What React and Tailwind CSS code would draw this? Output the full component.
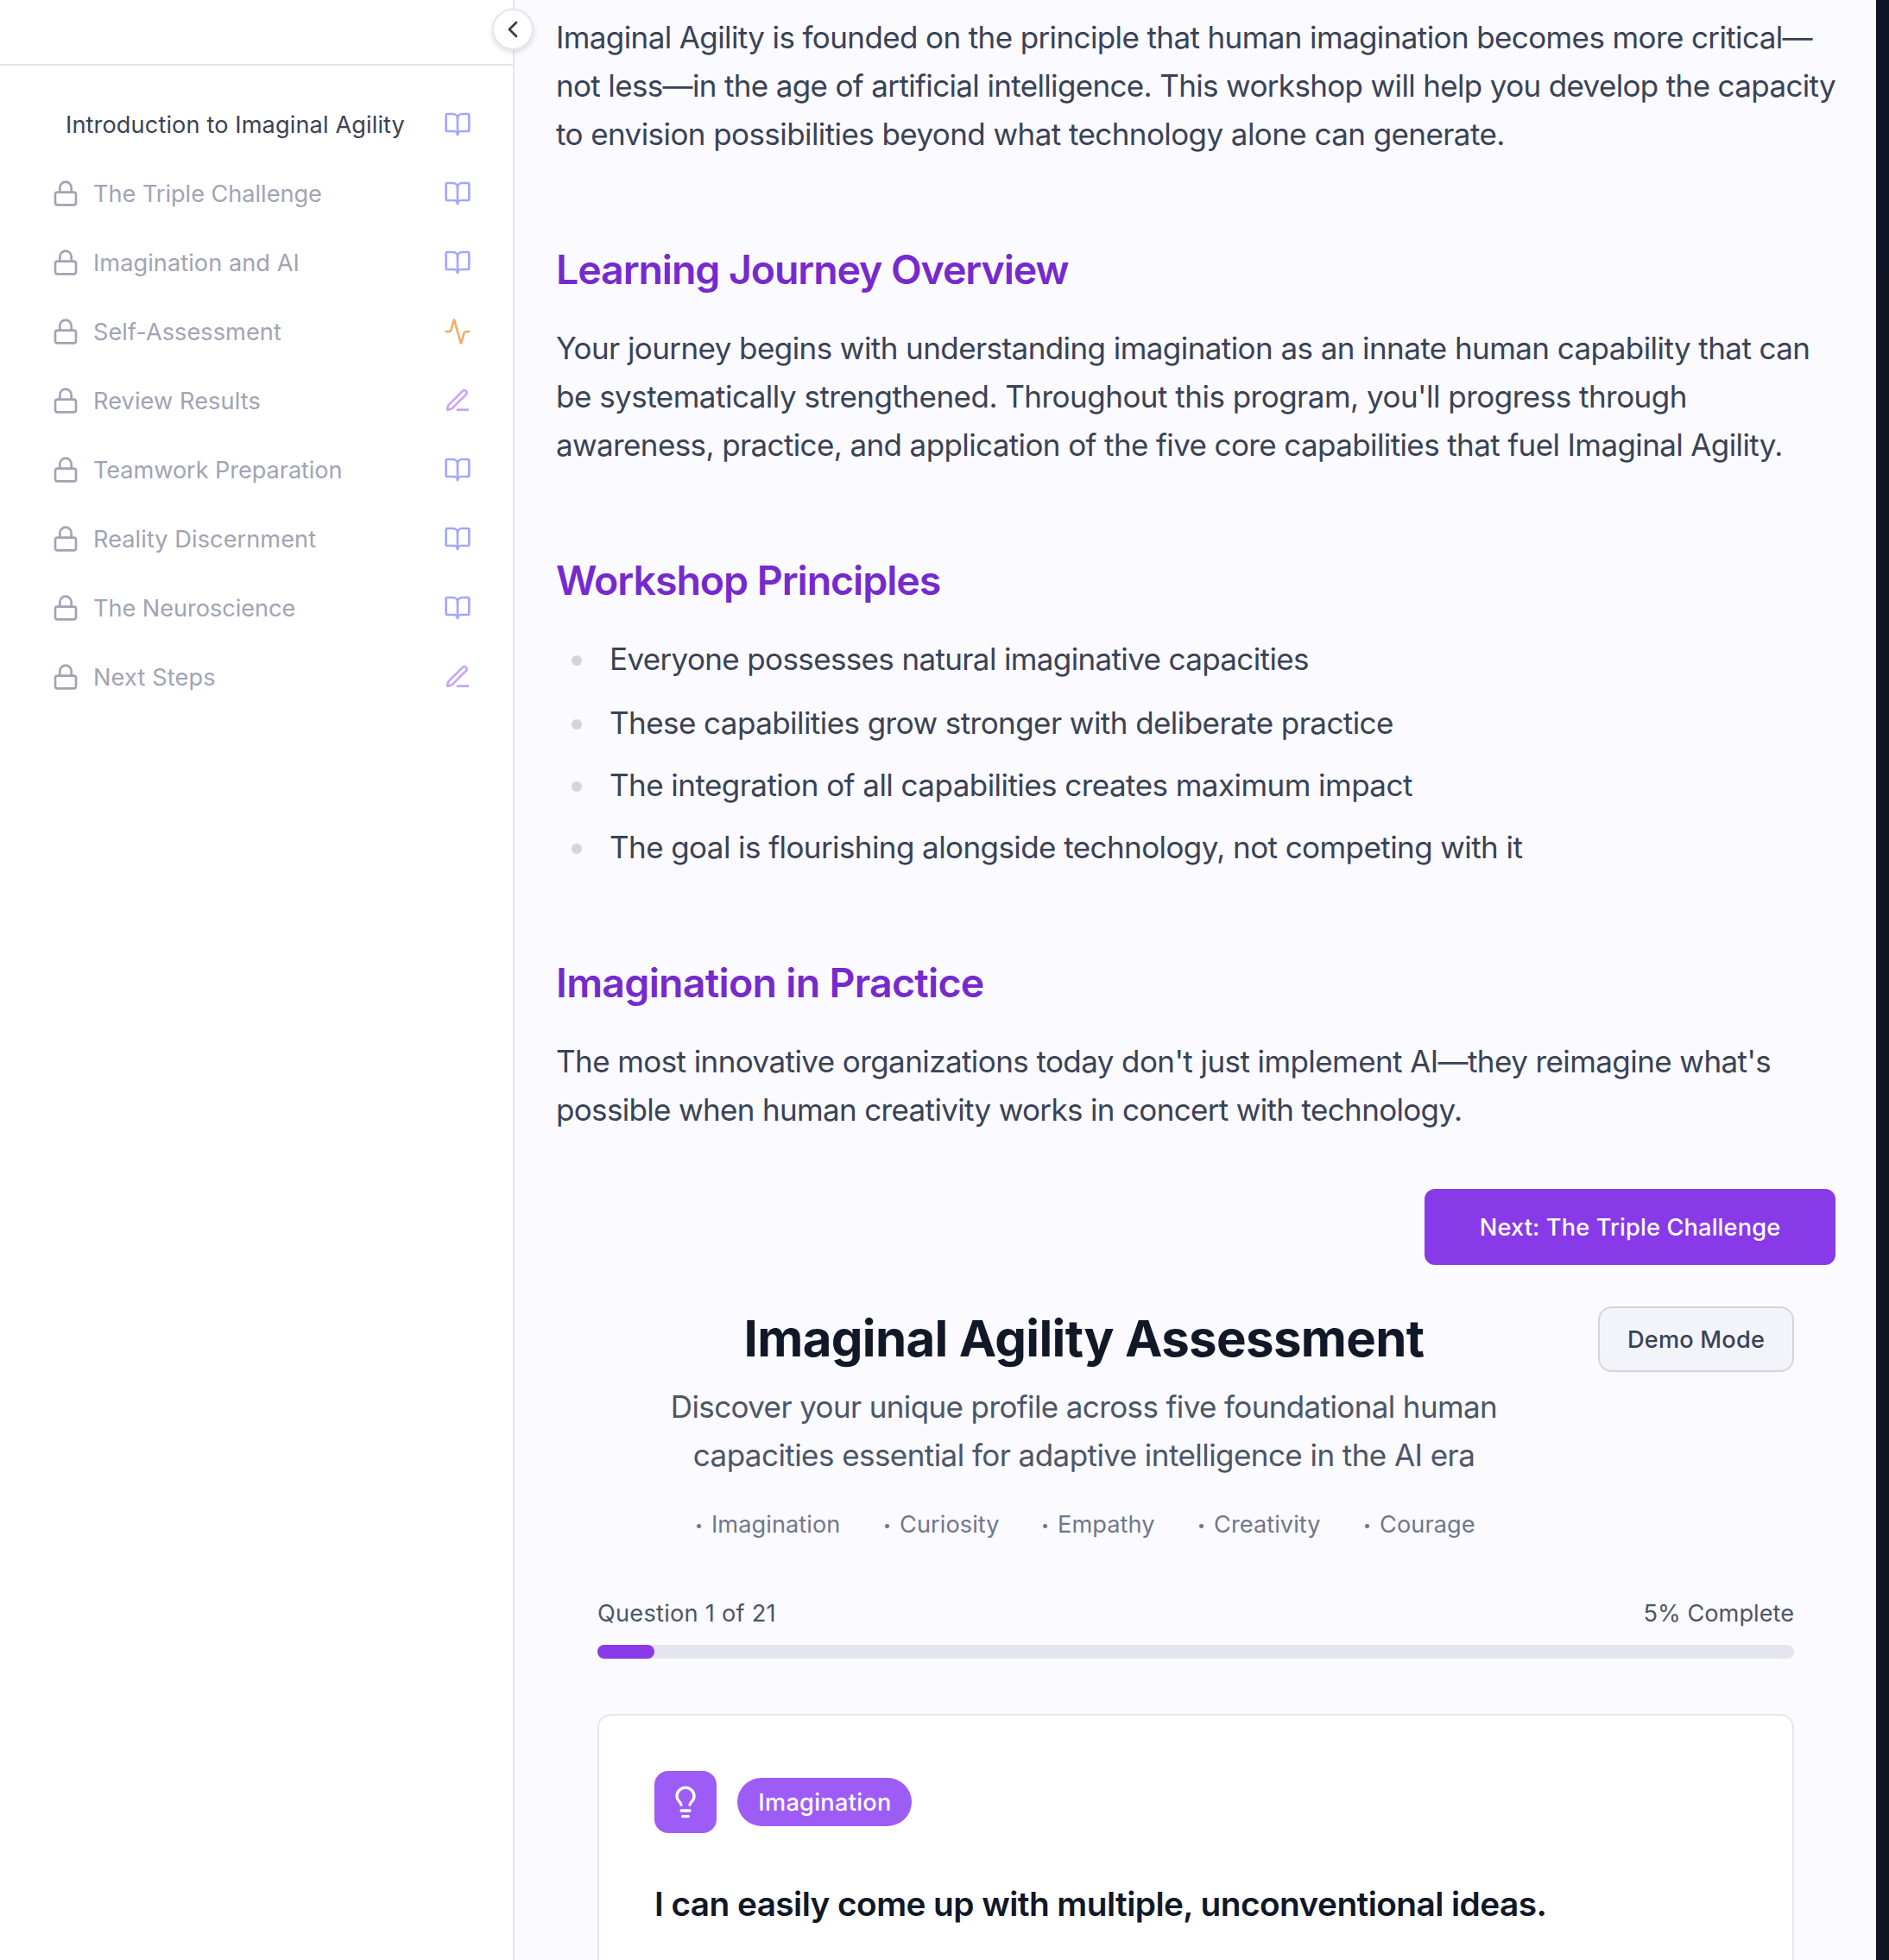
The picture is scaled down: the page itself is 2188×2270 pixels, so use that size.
import React from "react";
import { Activity, BookOpen, ChevronLeft, Lightbulb, Lock } from "lucide-react";

const steps = [
  { label: "Introduction to Imaginal Agility", kind: "read", open: true, tracking: "tracking-[0.0037em]" },
  { label: "The Triple Challenge", kind: "read", tracking: "tracking-[-0.0019em]" },
  { label: "Imagination and AI", kind: "read", tracking: "tracking-[0.0015em]" },
  { label: "Self-Assessment", kind: "activity", tracking: "tracking-[0.001em]" },
  { label: "Review Results", kind: "write", tracking: "tracking-[0.0025em]" },
  { label: "Teamwork Preparation", kind: "read", tracking: "tracking-[-0.0035em]" },
  { label: "Reality Discernment", kind: "read", tracking: "tracking-[0.0017em]" },
  { label: "The Neuroscience", kind: "read", tracking: "tracking-[-0.0028em]" },
  { label: "Next Steps", kind: "write", tracking: "tracking-[0.0045em]" },
];

const principles = [
  { text: "Everyone possesses natural imaginative capacities", tracking: "tracking-[-0.0182em]" },
  { text: "These capabilities grow stronger with deliberate practice", tracking: "tracking-[-0.016em]" },
  { text: "The integration of all capabilities creates maximum impact", tracking: "tracking-[-0.0157em]" },
  { text: "The goal is flourishing alongside technology, not competing with it", tracking: "tracking-[-0.0166em]" },
];

const capacities = ["Imagination", "Curiosity", "Empathy", "Creativity", "Courage"];

function PenIcon({ className }) {
  return (
    <svg
      className={className}
      viewBox="0 0 24 24"
      fill="none"
      stroke="currentColor"
      strokeWidth="2"
      strokeLinecap="round"
      strokeLinejoin="round"
    >
      <path d="M12 20h9" />
      <path d="M16.376 3.622a1 1 0 0 1 3.002 3.002L7.368 18.635a2 2 0 0 1-.855.506l-2.872.838a.5.5 0 0 1-.62-.62l.838-2.872a2 2 0 0 1 .506-.854z" />
    </svg>
  );
}

function StepIcon({ kind }) {
  if (kind === "activity") return <Activity className="size-8 text-[#f1ae6d]" />;
  if (kind === "write") return <PenIcon className="size-8 text-[#c9a5fb]" />;
  return <BookOpen className="size-8 text-[#a5a6fa]" />;
}

function Line({ className, children }) {
  return <span className={`block whitespace-nowrap ${className}`}>{children}</span>;
}

function SectionTitle({ className, children }) {
  return (
    <h2 className={`h-16 text-[46.5px] leading-[64px] font-semibold whitespace-nowrap text-[#762ace] ${className}`}>
      {children}
    </h2>
  );
}

function Sidebar() {
  return (
    <aside className="relative h-full w-[596px] shrink-0 border-r-2 border-[#e5e5ef] bg-white">
      <div className="h-[76px] border-b-2 border-[#e5e5ef]" />
      <button className="absolute top-[10px] -right-6 z-10 flex size-12 items-center justify-center rounded-full border-2 border-[#e5e5ef] bg-white shadow-[0_3px_6px_rgba(0,0,0,0.12)]">
        <ChevronLeft className="size-8 shrink-0 text-[#3c3c3c]" />
      </button>
      <ul className="mt-7 pr-12 pl-[60px]">
        {steps.map((step) => (
          <li key={step.label} className="flex h-20 items-center">
            {step.open ? null : <Lock className="mr-4 size-8 text-[#a1a4b4]" />}
            <span
              className={`pt-0.5 text-[27.2px] leading-10 whitespace-nowrap ${step.tracking} ${
                step.open ? "ml-4 text-[#3a4255]" : "text-[#a1a4b4]"
              }`}
            >
              {step.label}
            </span>
            <span className="ml-auto">
              <StepIcon kind={step.kind} />
            </span>
          </li>
        ))}
      </ul>
    </aside>
  );
}

function Lesson() {
  return (
    <article className="pr-[47px] pl-12 text-[35px] leading-[56px] text-[#3a4255]">
      <p className="pt-[15px]">
        <Line className="tracking-[-0.0175em]">
          Imaginal Agility is founded on the principle that human imagination becomes more critical—
        </Line>
        <Line className="tracking-[-0.0186em]">
          not less—in the age of artificial intelligence. This workshop will help you develop the capacity
        </Line>
        <Line className="tracking-[-0.0165em]">
          to envision possibilities beyond what technology alone can generate.
        </Line>
      </p>

      <SectionTitle className="mt-[97px] tracking-[-0.0235em]">Learning Journey Overview</SectionTitle>
      <p className="mt-[31px]">
        <Line className="tracking-[-0.0164em]">
          Your journey begins with understanding imagination as an innate human capability that can
        </Line>
        <Line className="tracking-[-0.0147em]">
          be systematically strengthened. Throughout this program, you'll progress through
        </Line>
        <Line className="tracking-[-0.0176em]">
          awareness, practice, and application of the five core capabilities that fuel Imaginal Agility.
        </Line>
      </p>

      <SectionTitle className="mt-[97px] tracking-[-0.0225em]">Workshop Principles</SectionTitle>
      <ul className="mt-[31px] flex flex-col gap-4 pl-[18px] [&>li:nth-child(2)]:mt-0.5">
        {principles.map((item) => (
          <li key={item.text} className="flex items-center">
            <span className="mt-1 mr-8 size-3 rounded-full bg-[#d3d4df]" />
            <span className={`whitespace-nowrap ${item.tracking}`}>{item.text}</span>
          </li>
        ))}
      </ul>

      <SectionTitle className="mt-[97px] tracking-[-0.0155em]">Imagination in Practice</SectionTitle>
      <p className="mt-[31px]">
        <Line className="tracking-[-0.0166em]">
          The most innovative organizations today don't just implement AI—they reimagine what's
        </Line>
        <Line className="tracking-[-0.0189em]">possible when human creativity works in concert with technology.</Line>
      </p>

      <div className="mt-16 flex justify-end">
        <button className="flex h-[88px] w-[476px] items-center justify-center rounded-xl bg-[#883ae8] pt-0.5 text-[27.2px] leading-10 font-medium tracking-[0.0051em] whitespace-nowrap text-white">
          Next: The Triple Challenge
        </button>
      </div>
    </article>
  );
}

function Assessment() {
  return (
    <section className="mt-12 mr-[95px] ml-24">
      <header className="flex items-start justify-between">
        <div className="w-[1127px] pt-px">
          <h1 className="text-center text-[58.2px] leading-[72px] font-bold tracking-[-0.0115em] whitespace-nowrap text-[#111827]">
            Imaginal Agility Assessment
          </h1>
          <p className="mt-[15px] text-center text-[35px] leading-[56px] text-[#4d5567]">
            <Line className="tracking-[-0.0178em]">Discover your unique profile across five foundational human</Line>
            <Line className="tracking-[-0.016em]">capacities essential for adaptive intelligence in the AI era</Line>
          </p>
          <ul className="mt-8 ml-[113px] grid grid-cols-[218px_183px_181px_192px_auto] text-[27.2px] leading-10 tracking-[0.002em] text-[#71778a]">
            {capacities.map((name) => (
              <li key={name} className="flex h-10 items-center whitespace-nowrap">
                <span className="w-[19px] pt-0.5 text-[16px] leading-none">•</span>
                <span className="pt-0.5">{name}</span>
              </li>
            ))}
          </ul>
        </div>
        <button className="flex h-[76px] w-[227px] items-center justify-center rounded-2xl border-2 border-[#d3d4df] bg-[#f3f4fa] pt-0.5 text-[27.2px] leading-10 font-medium tracking-[0.0071em] text-[#3a4255]">
          Demo Mode
        </button>
      </header>

      <div className="mt-16 flex justify-between text-[27.2px] leading-10 text-[#4d5567]">
        <span className="tracking-[0.009em]">Question 1 of 21</span>
        <span className="tracking-normal">5% Complete</span>
      </div>
      <div className="mt-4 h-4 rounded-full bg-[#e5e5ef]">
        <div className="h-4 w-[66px] rounded-full bg-[#883ae8]" />
      </div>

      <div className="mt-16 h-[400px] rounded-2xl border-2 border-[#e5e5ef] bg-white px-16 pt-16">
        <div className="flex items-center gap-6">
          <div className="flex size-[72px] items-center justify-center rounded-2xl bg-[#9e5cf7]">
            <Lightbulb className="size-10 text-white" />
          </div>
          <span className="flex h-14 w-[202px] items-center justify-center rounded-full bg-[#9e5cf7] pt-0.5 pl-px text-[27.2px] leading-10 font-medium tracking-[0.01em] text-white">
            Imagination
          </span>
        </div>
        <p className="mt-[54px] text-[38.8px] leading-[56px] font-semibold tracking-[-0.0146em] whitespace-nowrap text-[#111827]">
          I can easily come up with multiple, unconventional ideas.
        </p>
      </div>
    </section>
  );
}

export default function App() {
  return (
    <div className="flex h-[2270px] w-[2188px] overflow-hidden bg-[#fafaff] font-['Inter',sans-serif]">
      <Sidebar />
      <main className="h-full min-w-0 flex-1 overflow-hidden">
        <Lesson />
        <Assessment />
      </main>
      <div className="flex h-full w-[15px] shrink-0 flex-col bg-[#131523]">
        <div className="h-[313px] bg-[#0f1625]" />
      </div>
    </div>
  );
}
